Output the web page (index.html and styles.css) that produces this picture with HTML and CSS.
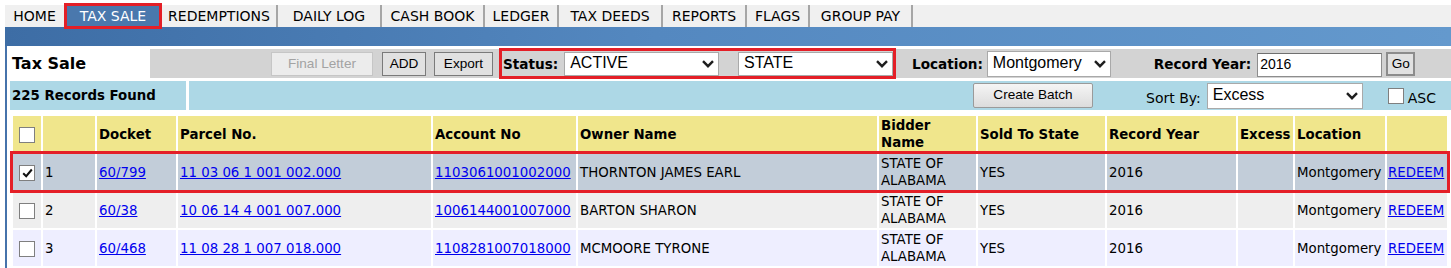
FILE: index.html
```html
<!DOCTYPE html>
<html>
<head>
	<title>Tax Sale</title>
	<link rel="stylesheet" href="styles.css">
</head>
<body>
	<div class='tabs'>
		<div class='tab t-home'>HOME</div>
		<div class='tab t-taxsale active'>TAX SALE</div>
		<div class='tab t-redemptions'>REDEMPTIONS</div>
		<div class='tab t-dailylog'>DAILY LOG</div>
		<div class='tab t-cashbook'>CASH BOOK</div>
		<div class='tab t-ledger'>LEDGER</div>
		<div class='tab t-taxdeeds'>TAX DEEDS</div>
		<div class='tab t-reports'>REPORTS</div>
		<div class='tab t-flags'>FLAGS</div>
		<div class='tab t-grouppay'>GROUP PAY</div>
	</div>
	<div class='bluebar'></div>
	<div class='main'>
		<div class='toolbar'>
			<div class='pagetitle'>Tax Sale</div>
			<div class='toolcell'>
				<div class='buton disabled finalletter'>Final Letter</div>
				<div class='buton addbtn'>ADD</div>
				<div class='buton exportbtn'>Export</div>
				<div class='statusbox'>
					<span class='label'>Status:</span>
					<div class='select sel-status'>
						<span>ACTIVE</span>
						<svg width='12' height='8' viewBox='0 0 12 8'><path d='M1 1.2 L6 6.2 L11 1.2' fill='none' stroke='#1e1e1e' stroke-width='2.4'/></svg>
					</div>
					<div class='select sel-state'>
						<span>STATE</span>
						<svg width='12' height='8' viewBox='0 0 12 8'><path d='M1 1.2 L6 6.2 L11 1.2' fill='none' stroke='#1e1e1e' stroke-width='2.4'/></svg>
					</div>
				</div>
				<span class='label locationlabel'>Location:</span>
				<div class='select sel-location'>
					<span>Montgomery</span>
					<svg width='12' height='8' viewBox='0 0 12 8'><path d='M1 1.2 L6 6.2 L11 1.2' fill='none' stroke='#1e1e1e' stroke-width='2.4'/></svg>
				</div>
				<span class='label yearlabel'>Record Year:</span>
				<div class='textinput'>2016</div>
				<div class='buton gobtn'>Go</div>
			</div>
		</div>
		<div class='recordsrow'>
			<div class='recordscount'>225 Records Found</div>
			<div class='recordstools'>
				<div class='buton batchbtn'>Create Batch</div>
				<span class='sortlabel'>Sort By:</span>
				<div class='select sel-sort'>
					<span>Excess</span>
					<svg width='12' height='8' viewBox='0 0 12 8'><path d='M1 1.2 L6 6.2 L11 1.2' fill='none' stroke='#1e1e1e' stroke-width='2.4'/></svg>
				</div>
				<span class='cb asccb'></span>
				<span class='asclabel'>ASC</span>
			</div>
		</div>
		<table class='grid'>
			<tr class='headrow'>
				<th class='c-cb'><span class='cb'></span></th>
				<th class='c-num'></th>
				<th class='c-docket'>Docket</th>
				<th class='c-parcel'>Parcel No.</th>
				<th class='c-acct'>Account No</th>
				<th class='c-owner'>Owner Name</th>
				<th class='c-bidder'>Bidder Name</th>
				<th class='c-sold'>Sold To State</th>
				<th class='c-year'>Record Year</th>
				<th class='c-excess'>Excess</th>
				<th class='c-loc'>Location</th>
				<th class='c-act'></th>
			</tr>
			<tr class='row selected'>
				<td class='c-cb'><span class='cb'><svg width='11' height='10' viewBox='0 0 11 10'><path d='M1.2 5.2 L4.2 8.2 L9.8 1.5' fill='none' stroke='#111' stroke-width='2'/></svg></span></td>
				<td>1</td>
				<td><a href='#'>60/799</a></td>
				<td><a href='#'>11 03 06 1 001 002.000</a></td>
				<td><a href='#'>1103061001002000</a></td>
				<td>THORNTON JAMES EARL</td>
				<td>STATE OF ALABAMA</td>
				<td>YES</td>
				<td>2016</td>
				<td></td>
				<td>Montgomery</td>
				<td class='c-act'><a href='#'>REDEEM</a></td>
			</tr>
			<tr class='row even'>
				<td class='c-cb'><span class='cb'></span></td>
				<td>2</td>
				<td><a href='#'>60/38</a></td>
				<td><a href='#'>10 06 14 4 001 007.000</a></td>
				<td><a href='#'>1006144001007000</a></td>
				<td>BARTON SHARON</td>
				<td>STATE OF ALABAMA</td>
				<td>YES</td>
				<td>2016</td>
				<td></td>
				<td>Montgomery</td>
				<td class='c-act'><a href='#'>REDEEM</a></td>
			</tr>
			<tr class='row odd'>
				<td class='c-cb'><span class='cb'></span></td>
				<td>3</td>
				<td><a href='#'>60/468</a></td>
				<td><a href='#'>11 08 28 1 007 018.000</a></td>
				<td><a href='#'>1108281007018000</a></td>
				<td>MCMOORE TYRONE</td>
				<td>STATE OF ALABAMA</td>
				<td>YES</td>
				<td>2016</td>
				<td></td>
				<td>Montgomery</td>
				<td class='c-act'><a href='#'>REDEEM</a></td>
			</tr>
		</table>
	</div>
</body>
</html>
```

FILE: styles.css
```css
body {
	margin: 0;
	font-family: "DejaVu Sans", Verdana, sans-serif;
	font-size: 13.33px;
	color: black;
	background-color: white;
}
.tabs {
	display: flex;
	margin: 5px 0 0 5px;
	height: 22px;
	background-color: #f0f0f0;
}
.tab {
	box-sizing: border-box;
	height: 22px;
	line-height: 22px;
	text-align: center;
	font-size: 14px;
	border-right: 2px solid #a6a6a6;
	user-select: none;
}
.tab.active {
	position: relative;
	background-color: #4a78ad;
	color: white;
	border-right: none;
}
.tab.active::after {
	content: '';
	position: absolute;
	left: 0;
	right: 0;
	top: -2px;
	bottom: -2px;
	border: 3px solid #e41f27;
}
.t-home { width: 59px; border-right: none; }
.t-taxsale { width: 98px; }
.t-redemptions { width: 116px; }
.t-dailylog { width: 104px; }
.t-cashbook { width: 103px; }
.t-ledger { width: 74px; }
.t-taxdeeds { width: 104px; }
.t-reports { width: 84px; }
.t-flags { width: 63px; }
.t-grouppay { width: 103px; }
.bluebar {
	margin-left: 5px;
	height: 19px;
	background-image: linear-gradient(to right, #3d6da5, #5488c0 45%, #6499cd);
}
.main {
	margin-left: 5px;
	border-left: 2px solid #4673ab;
	padding: 3px 0 0 3px;
}
.toolbar {
	display: flex;
	height: 29px;
}
.pagetitle {
	width: 138px;
	padding-left: 2px;
	font-weight: bold;
	font-size: 16px;
	line-height: 29px;
}
.toolcell {
	flex: 1;
	display: flex;
	align-items: center;
	background-color: #d3d3d3;
}
.buton {
	box-sizing: border-box;
	height: 24px;
	line-height: 22px;
	text-align: center;
	font-family: "Liberation Sans", Arial, sans-serif;
	font-size: 13.6px;
	background-color: #e1e1e1;
	border: 1px solid #7a7a7a;
	user-select: none;
}
.buton.disabled {
	color: #a3a3a3;
	background-color: #ececec;
	border-color: #c6c6c6;
}
.finalletter { width: 102px; margin-left: 121px; }
.addbtn { width: 44px; margin-left: 9px; }
.exportbtn { width: 59px; margin-left: 8px; }
.statusbox {
	box-sizing: border-box;
	display: flex;
	align-items: center;
	height: 31px;
	width: 397px;
	margin-left: 6px;
	padding-left: 1px;
	border: 3px solid #e41f27;
}
.label {
	font-weight: bold;
	font-size: 13.6px;
}
.select {
	box-sizing: border-box;
	display: flex;
	align-items: center;
	justify-content: space-between;
	height: 24px;
	padding: 0 4px 0 5px;
	background-color: white;
	border: 1px solid #a9a9a9;
	font-family: "Liberation Sans", Arial, sans-serif;
	font-size: 16px;
}
.select span {
	position: relative;
	top: -1px;
}
.sel-status { width: 156px; margin-left: 6px; }
.sel-state { width: 156px; margin-left: 19px; }
.locationlabel { margin-left: 16px; }
.sel-location { width: 124px; height: 26px; margin-left: 4px; }
.yearlabel { margin-left: 43px; }
.textinput {
	box-sizing: border-box;
	width: 125px;
	height: 24px;
	margin-left: 6px;
	margin-top: 2px;
	padding-left: 2px;
	line-height: 21px;
	background-color: white;
	border: 1px solid #8d8d8d;
	border-top-color: #6f6f6f;
	font-family: "Liberation Sans", Arial, sans-serif;
	font-size: 14px;
}
.gobtn {
	width: 29px;
	margin-left: 4px;
	border: 2px solid #8c8c8c;
	line-height: 20px;
}
.recordsrow {
	display: flex;
	height: 29px;
	margin-top: 3px;
}
.recordscount {
	width: 174px;
	padding-left: 2px;
	line-height: 29px;
	font-weight: bold;
	background-color: #add8e6;
}
.recordstools {
	flex: 1;
	display: flex;
	align-items: center;
	margin-left: 3px;
	background-color: #add8e6;
}
.batchbtn {
	width: 120px;
	height: 25px;
	margin-left: 784px;
	border-color: #9a9a9a;
	border-radius: 2px;
	background-image: linear-gradient(#f5f5f5, #dcdcdc);
}
.sortlabel {
	margin-left: 53px;
	font-size: 14px;
	position: relative;
	top: 2px;
}
.sel-sort { width: 156px; height: 26px; margin-left: 6px; }
.cb {
	box-sizing: border-box;
	display: inline-flex;
	align-items: center;
	justify-content: center;
	width: 16px;
	height: 16px;
	background-color: white;
	border: 1px solid #7f7f7f;
	vertical-align: middle;
}
.asccb { margin-left: 25px; }
.asclabel {
	margin-left: 4px;
	font-size: 14px;
	position: relative;
	top: 2px;
}
.grid {
	table-layout: fixed;
	width: 1438px;
	margin: 4px 0 0 1px;
	border-spacing: 2px;
}
.grid th, .grid td {
	box-sizing: border-box;
	padding: 0 2px;
	text-align: left;
	vertical-align: middle;
	line-height: 17px;
}
.grid th {
	font-weight: bold;
}
.headrow th {
	height: 36px;
	background-color: #f0e68c;
}
.row td {
	height: 36px;
}
.grid .c-cb { text-align: center; padding: 0; }
.grid .c-act { padding: 0 1px; }
.c-cb { width: 28px; }
.c-num { width: 52px; }
.c-docket { width: 79px; }
.c-parcel { width: 253px; }
.c-acct { width: 143px; }
.c-owner { width: 299px; }
.c-bidder { width: 97px; }
.c-sold { width: 127px; }
.c-year { width: 129px; }
.c-excess { width: 55px; }
.c-loc { width: 90px; }
.c-act { width: 60px; }
.row.selected td { background-color: #c2cdd9; }
.row.even td { background-color: #eeeeee; }
.row.odd td { background-color: #eeeeff; }
.row.selected {
	outline: 3px solid #e41f27;
}
.grid a {
	color: #0000ee;
	text-decoration: underline;
}
```
